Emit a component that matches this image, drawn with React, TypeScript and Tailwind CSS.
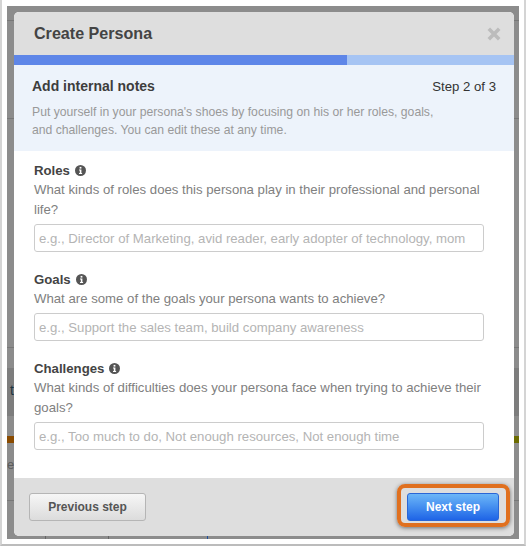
const fontStack = "font-['Liberation_Sans',Arial,sans-serif]";

function InfoIcon() {
  return (
    <svg width="11" height="11" viewBox="0 0 11 11" className="ml-[5px] shrink-0">
      <circle cx="5.5" cy="5.5" r="5.5" fill="#555" />
      <rect x="4.6" y="1.9" width="1.8" height="1.7" fill="#fff" />
      <path d="M4 4.5h2.4v3.4h.7v1H4v-1h.8V5.5H4z" fill="#fff" />
    </svg>
  );
}

function Field({
  label,
  question,
  placeholder,
}: {
  label: string;
  question: string;
  placeholder: string;
}) {
  return (
    <div className="mb-[20px]">
      <div className="flex items-center h-[15px] mb-[2px] text-[13.2px] font-bold text-[#444]">
        {label}
        <InfoIcon />
      </div>
      <p className="w-[450px] text-[13.2px] leading-[20px] text-[#808080] mb-[4px]">{question}</p>
      <input
        readOnly
        placeholder={placeholder}
        className="block w-[450px] h-[28px] px-[4px] text-[13.2px] bg-white border border-[#ccc] rounded-[3px] placeholder:text-[#b4b4b4] outline-none"
      />
    </div>
  );
}

function Backdrop() {
  // what shows of the page behind the overlay, as a stack of strips
  return (
    <div className="absolute inset-0 flex flex-col">
      <div className="h-[14px] shrink-0" />
      <div className="h-px shrink-0 bg-[#777]" />
      <div className="h-[97px] shrink-0" />
      <div className="h-px shrink-0 bg-[#777]" />
      <div className="h-[228px] shrink-0" />
      <div className="h-px shrink-0 bg-[#777]" />
      <div className="h-[20px] shrink-0" />
      <div className="h-[48px] shrink-0 bg-[#7d7d7d] pl-[3px] pt-[15px] text-[14px] leading-[15px] text-[#1c3440]">
        t
      </div>
      <div className="h-[20px] shrink-0" />
      <div className="h-[7px] shrink-0 flex justify-between">
        <div className="w-[7px] bg-[#8a4b00]" />
        <div className="w-[5px] bg-[#6b6b00]" />
      </div>
      <div className="h-[57px] shrink-0 pt-[15px] text-[13px] leading-[14px] text-[#5c5c5c]">e</div>
      <div className="h-px shrink-0 bg-[#777]" />
      <div className="flex-1 flex items-end pl-[38px]">
        <div className="w-px h-[3px] bg-[#666]" />
        <div className="w-px h-[3px] ml-[62px] bg-[#666]" />
        <div className="w-px h-[3px] ml-[98px] bg-[#1f4f9c]" />
      </div>
    </div>
  );
}

export default function App() {
  return (
    <div className={`${fontStack} w-[526px] h-[547px] bg-white overflow-hidden`}>
      <div className="w-[526px] h-[546px] pt-[6px] pl-[5px] border-x-2 border-x-[#d4d4d4] border-b-2 border-b-[#bcbcbc]">
        <div className="relative w-[512px] h-[533px] bg-[#8c8c8c] pt-[6px] pl-[7px] overflow-hidden">
          <Backdrop />

          <div className="relative w-[500px] h-[524px] flex flex-col rounded-[5px] overflow-hidden bg-white">
            <div className="h-[43px] shrink-0 bg-[#dedede] flex items-center justify-between pl-[20px] pr-[13px]">
              <h1 className="text-[16.1px] font-bold text-[#444]">Create Persona</h1>
              <svg width="14" height="14" viewBox="0 0 14 14">
                <path d="M1.8 1.8l10.4 10.4M12.2 1.8L1.8 12.2" stroke="#bcbcbc" strokeWidth="3.6" />
              </svg>
            </div>

            <div className="h-[10px] shrink-0 flex bg-[#a6c4f3]">
              <div className="w-[333px] bg-[#5e86e8]" />
            </div>

            <div className="h-[86px] shrink-0 bg-[#edf3fb] px-[18px] pt-[13px]">
              <div className="flex items-center justify-between h-[17px]">
                <h2 className="text-[14px] font-bold text-[#3d3d3d]">Add internal notes</h2>
                <span className="text-[13.2px] text-[#333]">Step 2 of 3</span>
              </div>
              <p className="mt-[8px] text-[12.2px] leading-[18px] text-[#999] w-[420px]">
                Put yourself in your persona's shoes by focusing on his or her roles, goals,
                <br />
                and challenges. You can edit these at any time.
              </p>
            </div>

            <div className="flex-1 pl-[20px] pt-[12px]">
              <Field
                label="Roles"
                question="What kinds of roles does this persona play in their professional and personal life?"
                placeholder="e.g., Director of Marketing, avid reader, early adopter of technology, mom"
              />
              <Field
                label="Goals"
                question="What are some of the goals your persona wants to achieve?"
                placeholder="e.g., Support the sales team, build company awareness"
              />
              <Field
                label="Challenges"
                question="What kinds of difficulties does your persona face when trying to achieve their goals?"
                placeholder="e.g., Too much to do, Not enough resources, Not enough time"
              />
            </div>

            <div className="h-[58px] shrink-0 bg-[#dedede] flex items-start justify-between pl-[15px] pr-[4px] pt-[6px]">
              <button className="mt-[9px] w-[117px] h-[28px] rounded-[3px] border border-[#b5b5b5] bg-gradient-to-b from-[#f6f6f6] to-[#dcdcdc] text-[12px] font-bold text-[#555]">
                Previous step
              </button>
              <div className="pl-[6px] pr-[7px] pt-[5px] pb-[2px] border-4 border-[#e0701f] rounded-[8px] shadow-[0_1px_4px_rgba(0,0,0,0.5)]">
                <button className="block w-[92px] h-[28px] rounded-[3px] border border-[#2a66d6] bg-gradient-to-b from-[#6db6f7] to-[#1f63e6] text-[12px] font-bold text-white">
                  Next step
                </button>
              </div>
            </div>
          </div>
        </div>
      </div>
    </div>
  );
}
